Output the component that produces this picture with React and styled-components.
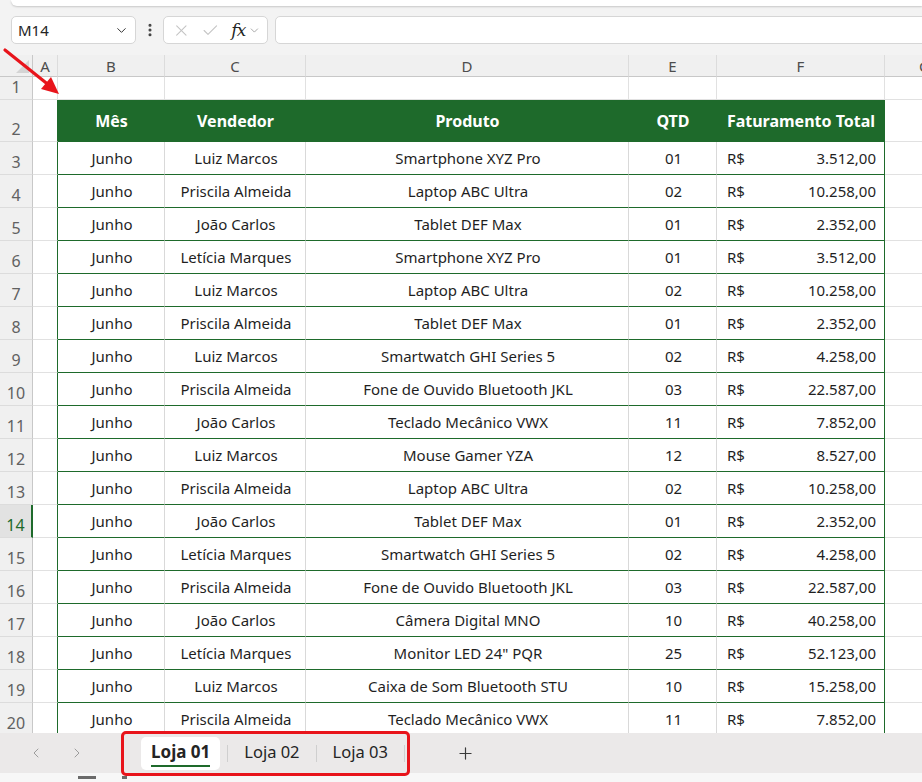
import React from 'react'
import styled, { createGlobalStyle } from 'styled-components'
import { ChevronDown, ChevronLeft, ChevronRight, X, Check, EllipsisVertical, Plus } from 'lucide-react'

const GREEN = '#1e6a2b'
const GRID = '#e1e1e1'

const GlobalStyle = createGlobalStyle`
  * { box-sizing: border-box; }
  body {
    margin: 0;
    font-family: "Noto Sans", "Open Sans", sans-serif;
    background: #f3f3f3;
  }
`

const Window = styled.div`
  width: 922px;
  height: 782px;
  display: flex;
  flex-direction: column;
  background: #f3f3f3;
  overflow: hidden;
  position: relative;
`

const RibbonEdge = styled.div`
  flex-shrink: 0;
  height: 6px;
  margin-left: 11px;
  background: #fff;
  border-bottom-left-radius: 8px;
  box-shadow: 0 1px 2px rgba(0, 0, 0, 0.18);
`

const FormulaBar = styled.div`
  flex-shrink: 0;
  display: flex;
  align-items: center;
  height: 28px;
  margin: 10px 0 11px;
  padding-left: 11px;
`

const Field = styled.div`
  height: 28px;
  background: #fff;
  border: 1px solid #d6d6d6;
  border-radius: 5px;
  display: flex;
  align-items: center;
`

const NameBox = styled(Field)`
  width: 125px;
  padding: 0 6px 0 6px;
  justify-content: space-between;
  font-size: 15px;
  color: #242424;
`

const DotsBtn = styled.div`
  width: 27px;
  display: flex;
  justify-content: center;
  color: #424242;
`

const FxBox = styled(Field)`
  width: 105px;
  padding: 0 6px 0 8px;
  gap: 10px;
  color: #c4c4c4;
`

const Fx = styled.span`
  font-family: "DejaVu Serif", "Liberation Serif", serif;
  font-style: italic;
  font-size: 17px;
  color: #242424;
  margin-left: 2px;
  letter-spacing: -1px;
`

const FormulaInput = styled(Field)`
  flex: 1;
  margin-left: 7px;
  margin-right: -12px;
`

const Sheet = styled.div`
  flex-shrink: 0;
  height: 678px;
  overflow: hidden;
  background: #fff;
`

const GridRow = styled.div`
  display: grid;
  grid-template-columns: 33px 25px 107px 141px 323px 88px 168px 80px;
  height: ${p => p.$h}px;
`

const Corner = styled.div`
  background: #f0f0f0;
  border-right: 1px solid #c8c8c8;
  border-bottom: 1px solid #c8c8c8;
  display: flex;
  align-items: flex-end;
  justify-content: flex-end;
  padding: 0 3px 3px 0;
`

const Triangle = styled.div`
  width: 0;
  height: 0;
  border-left: 13px solid transparent;
  border-bottom: 13px solid #d4d4d4;
`

const ColHead = styled.div`
  background: #f0f0f0;
  border-right: 1px solid #dcdcdc;
  border-bottom: 1px solid #c8c8c8;
  display: flex;
  align-items: center;
  justify-content: center;
  font-size: 15px;
  color: #4d4d4d;
`

const RowHead = styled.div`
  background: ${p => (p.$selected ? '#e2e2e2' : '#f0f0f0')};
  border-bottom: 1px solid #dcdcdc;
  border-right: ${p => (p.$selected ? `2px solid ${GREEN}` : '1px solid #c8c8c8')};
  display: flex;
  align-items: flex-end;
  justify-content: center;
  padding-bottom: 2px;
  font-size: 16px;
  line-height: 20px;
  color: ${p => (p.$selected ? GREEN : '#616161')};
`

const Cell = styled.div`
  display: flex;
  align-items: center;
  justify-content: ${p => p.$justify || 'center'};
  padding: 0 8px 0 10px;
  font-size: 15px;
  color: #1f1f1f;
  white-space: nowrap;
  overflow: hidden;
  background: #fff;
  border-bottom: 1px solid ${p => (p.$table ? GREEN : GRID)};
  border-right: 1px solid ${p => (p.$edge ? GREEN : p.$table ? '#d9d9d9' : GRID)};
`

const HeadCell = styled.div`
  display: flex;
  align-items: center;
  justify-content: center;
  background: ${GREEN};
  color: #fff;
  font-weight: 700;
  font-size: 16px;
  white-space: nowrap;
  border-bottom: 1px solid ${GREEN};
`

const TabBar = styled.div`
  flex-shrink: 0;
  height: 40px;
  background: #ebe9e9;
  display: flex;
  align-items: center;
  padding-left: 28px;
`

const NavBtn = styled.div`
  color: #9c9c9c;
  display: flex;
  margin-right: ${p => p.$gap}px;
`

const TabGroup = styled.div`
  position: relative;
  z-index: 2;
  flex-shrink: 0;
  height: 39px;
  margin-top: 1px;
  width: 283px;
  display: flex;
  align-items: center;
  padding-left: 17px;
  outline: 3px solid #e8141b;
  border-radius: 2px;
`

const Tab = styled.div`
  flex-shrink: 0;
  height: 33px;
  padding: 0 ${p => (p.$active ? 10 : 9)}px;
  display: flex;
  flex-direction: column;
  align-items: center;
  justify-content: center;
  white-space: nowrap;
  font-size: ${p => (p.$active ? 17 : 16.5)}px;
  font-weight: ${p => (p.$active ? 700 : 400)};
  color: #242424;
  background: ${p => (p.$active ? '#fff' : 'transparent')};
  border-radius: 5px;
`

const TabLabel = styled.span`
  line-height: 22px;
  padding-bottom: 2px;
  border-bottom: 2px solid ${p => (p.$active ? GREEN : 'transparent')};
  margin-top: ${p => (p.$active ? 1 : 0)}px;
`

const Sep = styled.div`
  flex-shrink: 0;
  width: 1px;
  height: 17px;
  margin: 0 7px;
  background: #cfcfcf;
`

const AddBtn = styled.div`
  margin-left: 49px;
  color: #3a3a3a;
  display: flex;
`

const StatusBar = styled.div`
  flex: 1;
  background: #f7f7f7;
  display: flex;
  align-items: flex-end;
  padding-left: 78px;
  gap: 26px;
`

const StatusMark = styled.div`
  width: ${p => p.$w}px;
  height: 3px;
  margin-bottom: 3px;
  background: #6a6a6a;
`

const Arrow = styled.svg`
  position: absolute;
  left: 0;
  top: 44px;
`

const rows = [
  ['Luiz Marcos', 'Smartphone XYZ Pro', '01', '3.512,00'],
  ['Priscila Almeida', 'Laptop ABC Ultra', '02', '10.258,00'],
  ['João Carlos', 'Tablet DEF Max', '01', '2.352,00'],
  ['Letícia Marques', 'Smartphone XYZ Pro', '01', '3.512,00'],
  ['Luiz Marcos', 'Laptop ABC Ultra', '02', '10.258,00'],
  ['Priscila Almeida', 'Tablet DEF Max', '01', '2.352,00'],
  ['Luiz Marcos', 'Smartwatch GHI Series 5', '02', '4.258,00'],
  ['Priscila Almeida', 'Fone de Ouvido Bluetooth JKL', '03', '22.587,00'],
  ['João Carlos', 'Teclado Mecânico VWX', '11', '7.852,00'],
  ['Luiz Marcos', 'Mouse Gamer YZA', '12', '8.527,00'],
  ['Priscila Almeida', 'Laptop ABC Ultra', '02', '10.258,00'],
  ['João Carlos', 'Tablet DEF Max', '01', '2.352,00'],
  ['Letícia Marques', 'Smartwatch GHI Series 5', '02', '4.258,00'],
  ['Priscila Almeida', 'Fone de Ouvido Bluetooth JKL', '03', '22.587,00'],
  ['João Carlos', 'Câmera Digital MNO', '10', '40.258,00'],
  ['Letícia Marques', 'Monitor LED 24" PQR', '25', '52.123,00'],
  ['Luiz Marcos', 'Caixa de Som Bluetooth STU', '10', '15.258,00'],
  ['Priscila Almeida', 'Teclado Mecânico VWX', '11', '7.852,00'],
]

const letters = ['A', 'B', 'C', 'D', 'E', 'F', 'G']

export default function App() {
  return (
    <Window>
      <GlobalStyle />
      <RibbonEdge />
      <FormulaBar>
        <NameBox>
          <span>M14</span>
          <ChevronDown size={15} color="#333" strokeWidth={1.6} />
        </NameBox>
        <DotsBtn>
          <EllipsisVertical size={16} strokeWidth={2.6} />
        </DotsBtn>
        <FxBox>
          <X size={19} strokeWidth={1.4} />
          <Check size={19} strokeWidth={1.4} />
          <Fx>fx</Fx>
          <ChevronDown size={13} color="#9a9a9a" strokeWidth={1.6} style={{ marginLeft: -7 }} />
        </FxBox>
        <FormulaInput />
      </FormulaBar>

      <Sheet>
        <GridRow $h={22}>
          <Corner><Triangle /></Corner>
          {letters.map(l => <ColHead key={l}>{l}</ColHead>)}
        </GridRow>

        <GridRow $h={23}>
          <RowHead>1</RowHead>
          {letters.map(l => <Cell key={l} />)}
        </GridRow>

        <GridRow $h={42}>
          <RowHead>2</RowHead>
          <Cell $edge />
          <HeadCell>Mês</HeadCell>
          <HeadCell>Vendedor</HeadCell>
          <HeadCell>Produto</HeadCell>
          <HeadCell>QTD</HeadCell>
          <HeadCell>Faturamento Total</HeadCell>
          <Cell />
        </GridRow>

        {rows.map(([seller, product, qty, total], i) => (
          <GridRow $h={33} key={i}>
            <RowHead $selected={i + 3 === 14}>{i + 3}</RowHead>
            <Cell $edge />
            <Cell $table>Junho</Cell>
            <Cell $table>{seller}</Cell>
            <Cell $table>{product}</Cell>
            <Cell $table>{qty}</Cell>
            <Cell $table $edge $justify="space-between">
              <span>R$</span>
              <span>{total}</span>
            </Cell>
            <Cell />
          </GridRow>
        ))}
      </Sheet>

      <TabBar>
        <NavBtn $gap={25}><ChevronLeft size={16} strokeWidth={1.5} /></NavBtn>
        <NavBtn $gap={39}><ChevronRight size={16} strokeWidth={1.5} /></NavBtn>
        <TabGroup>
          <Tab $active><TabLabel $active>Loja 01</TabLabel></Tab>
          <Sep />
          <Tab><TabLabel>Loja 02</TabLabel></Tab>
          <Sep />
          <Tab><TabLabel>Loja 03</TabLabel></Tab>
          <Sep />
        </TabGroup>
        <AddBtn><Plus size={19} strokeWidth={1.5} /></AddBtn>
      </TabBar>
      <StatusBar>
        <StatusMark $w={18} />
        <StatusMark $w={5} />
      </StatusBar>

      <Arrow width="70" height="60" viewBox="0 0 70 60">
        <line x1="5" y1="6" x2="50" y2="42" stroke="#e8141b" strokeWidth="3.2" strokeLinecap="round" />
        <polygon points="59,50 41,45 51,33" fill="#e8141b" />
      </Arrow>
    </Window>
  )
}
